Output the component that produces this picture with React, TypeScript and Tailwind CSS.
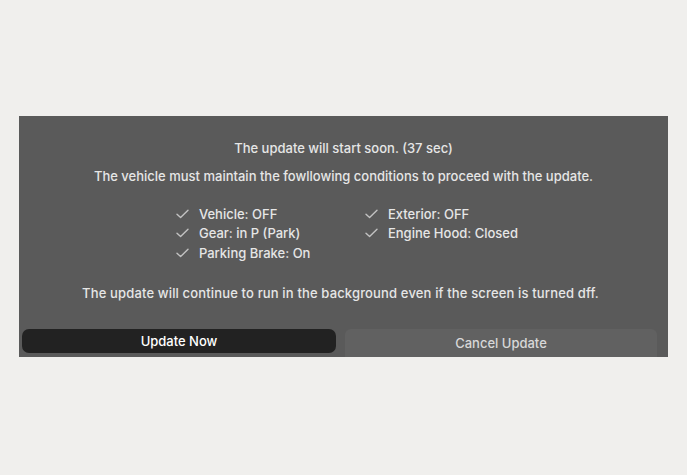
import React from 'react';

const Check = () => (
  <svg width="13" height="10" viewBox="0 0 13 10" className="shrink-0">
    <path d="M1 5.2 L4.6 8.6 L12 1.2" fill="none" stroke="#c2c2c2" strokeWidth="1.4" strokeLinecap="round" strokeLinejoin="round" />
  </svg>
);

const Item = ({ label }: { label: string }) => (
  <div className="flex items-center gap-[10px] h-[19.5px] whitespace-nowrap">
    <Check />
    <span>{label}</span>
  </div>
);

export default function App() {
  return (
    <div className="min-h-[475px] w-full bg-[#f0efed] pt-[116px] pl-[19px] font-['Inter',sans-serif]">
      <div className="w-[649px] h-[241px] bg-[#5a5a5a] flex flex-col items-center text-[13px] font-medium text-[#e6e6e6] leading-[18px]">
        <div className="mt-[23px]">The update will start soon. (37 sec)</div>
        <div className="mt-[10px]">The vehicle must maintain the fowllowing conditions to proceed with the update.</div>

        <div className="mt-[19px] flex pl-[7px]">
          <div className="w-[189px]">
            <Item label="Vehicle: OFF" />
            <Item label="Gear: in P (Park)" />
            <Item label="Parking Brake: On" />
          </div>
          <div>
            <Item label="Exterior: OFF" />
            <Item label="Engine Hood: Closed" />
          </div>
        </div>

        <div className="mt-[21px] tracking-[0.15px] pr-[6px]">The update will continue to run in the background even if the screen is turned dff.</div>

        <div className="mt-auto w-full flex items-start gap-[9px] pl-[3px] pr-[11px]">
          <button className="w-[314px] h-[24px] rounded-[7px] bg-[#222222] text-white text-[13px] font-medium">
            Update Now
          </button>
          <button className="flex-1 h-[28px] rounded-t-[6px] bg-[#616161] text-[#d8d8d8] text-[13px] font-medium">
            Cancel Update
          </button>
        </div>
      </div>
    </div>
  );
}
